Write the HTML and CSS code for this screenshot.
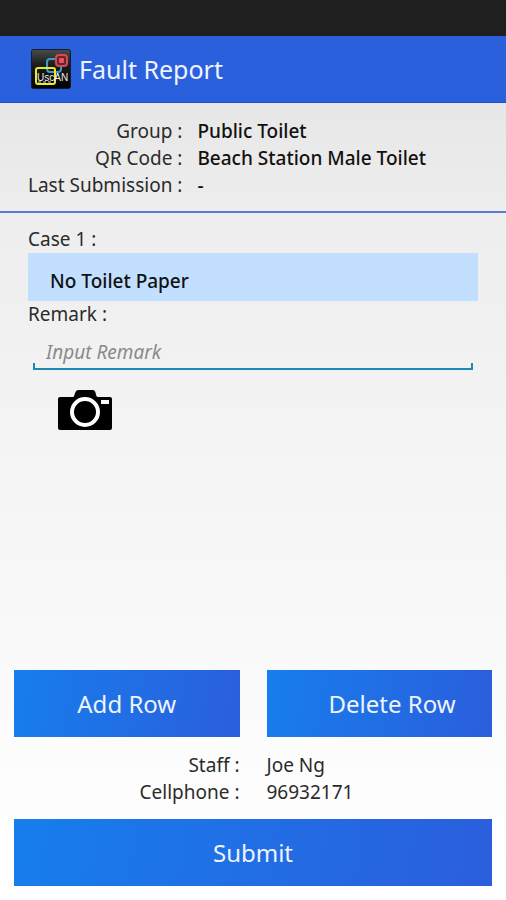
FILE: index.html
```html
<!DOCTYPE html>
<html lang="en">
<head>
<meta charset="utf-8">
<meta name="viewport" content="width=device-width, initial-scale=1">
<title>Fault Report</title>
<link rel="stylesheet" href="styles.css">
</head>
<body>
<div class="status-bar"></div>
<header class="app-bar">
  <svg class="logo" viewBox="0 0 40 40" aria-hidden="true">
    <defs>
      <linearGradient id="tile" x1="0" y1="0" x2="0" y2="1">
        <stop offset="0" stop-color="#4a4c4c"/>
        <stop offset=".4" stop-color="#1b1c1c"/>
        <stop offset="1" stop-color="#000"/>
      </linearGradient>
    </defs>
    <rect x=".5" y=".5" width="39" height="39" rx="2" fill="url(#tile)" stroke="#111c33"/>
    <rect x="16" y="10" width="14" height="13" rx="3" fill="none" stroke="#389fc8" stroke-width="2"/>
    <rect x="25" y="6" width="11" height="11" rx="3" fill="#65252d" stroke="#d94753" stroke-width="2"/>
    <rect x="28" y="9" width="5" height="5" rx="1" fill="#e55360"/>
    <rect x="5" y="19" width="19" height="16" rx="2" fill="none" stroke="#efe72c" stroke-width="2"/>
    <path d="M7 33h3M12 33h3M17 33h3" stroke="#ddd" stroke-width="1"/>
    <text class="logo-text" x="6" y="32">UscAN</text>
  </svg>
  <h1 class="title">Fault Report</h1>
</header>
<main class="page">
  <dl class="summary">
    <dt>Group :</dt><dd>Public Toilet</dd>
    <dt>QR Code :</dt><dd>Beach Station Male Toilet</dd>
    <dt>Last Submission :</dt><dd>-</dd>
  </dl>
  <form class="report">
    <section class="case">
      <p class="label" id="case-label">Case 1 :</p>
      <button class="fault" type="button" aria-describedby="case-label">No Toilet Paper</button>
      <label class="label" for="remark">Remark :</label>
      <div class="field"><input class="remark" id="remark" type="text" placeholder="Input Remark"></div>
      <button class="photo" type="button" aria-label="Take photo">
        <svg class="camera" viewBox="0 0 54 42" aria-hidden="true">
          <path d="M2 8h13c2 0 1-6 5-7h15c4 1 2 7 5 7h12q2 0 2 2v29q0 2-2 2H2q-2 0-2-2V10q0-2 2-2z" fill="#000"/>
          <circle cx="27" cy="23" r="13" fill="none" stroke="#fff" stroke-width="4"/>
          <path d="M43 11h8v4h-8z" fill="#fff"/>
        </svg>
      </button>
    </section>
    <div class="row-actions">
      <button class="action" type="button">Add Row</button>
      <button class="action action-delete" type="button">Delete Row</button>
    </div>
    <dl class="staff">
      <dt>Staff :</dt><dd>Joe Ng</dd>
      <dt>Cellphone :</dt><dd>96932171</dd>
    </dl>
    <button class="action" type="submit">Submit</button>
  </form>
</main>
</body>
</html>
```
FILE: styles.css
```css
* {
  box-sizing: border-box;
}

body {
  margin: 0;
  min-height: 100vh;
  display: flex;
  flex-direction: column;
  font: 19px/27px "Noto Sans", sans-serif;
  color: #2b2b2b;
  background: #fff;
}

h1, p, dl, dd {
  margin: 0;
}

button, input {
  font: inherit;
  border: 0;
  border-radius: 0;
}

.status-bar {
  height: 36px;
  background: #1f1f1f;
}

.app-bar {
  display: flex;
  align-items: center;
  gap: 8px;
  height: 67px;
  padding: 0 31px;
  color: #eef3ff;
  background: #2b60dc;
  border-bottom: 1px solid #1c50dc;
}

.logo {
  width: 40px;
  height: 40px;
}

.logo-text {
  font: 10px "Liberation Sans", sans-serif;
  fill: #eee;
}

.title {
  font-size: 25px;
  font-weight: 400;
}

.page {
  flex: 1;
  display: flex;
  flex-direction: column;
  background: linear-gradient(#e7e7e7, #eee 15%, #fff 95%);
}

.summary, .staff {
  display: grid;
}

.summary {
  grid-template-columns: max-content 1fr;
  column-gap: 15px;
  padding: 15px 28px 12px;
  border-bottom: 2px solid #5a7cd4;
}

.summary dt, .staff dt {
  text-align: right;
}

.summary dd {
  font-weight: 500;
  color: #111;
}

.report {
  flex: 1;
  display: flex;
  flex-direction: column;
  padding: 13px 14px 14px;
}

.case {
  flex: 1;
  display: flex;
  flex-direction: column;
  padding: 0 14px;
}

.fault {
  height: 48px;
  padding: 8px 22px 0;
  text-align: left;
  font-weight: 500;
  color: #111;
  background: #c2dfff;
}

.field {
  padding: 6px 5px 0;
}

.remark {
  display: block;
  width: 100%;
  height: 36px;
  padding: 0 13px;
  outline: 0;
  color: #222;
  background:
    linear-gradient(#1d87b5, #1d87b5) left bottom / 100% 2px no-repeat,
    linear-gradient(#1d87b5, #1d87b5) left bottom / 2px 7px no-repeat,
    linear-gradient(#1d87b5, #1d87b5) right bottom / 2px 7px no-repeat;
}

.remark::placeholder {
  color: #8a8a8a;
  font-style: italic;
  opacity: 1;
}

.photo {
  align-self: flex-start;
  margin: 19px 30px;
  padding: 0;
  background: none;
}

.camera {
  display: block;
  width: 54px;
  height: 42px;
}

.row-actions {
  display: grid;
  grid-template-columns: minmax(0, 1fr) minmax(0, 1fr);
  gap: 27px;
}

.action {
  height: 67px;
  padding: 0 24px;
  font-size: 24px;
  color: #eef4ff;
  background: linear-gradient(100deg, #177eed, #2b5edc);
}

.action-delete {
  padding: 0 24px 0 62px;
  text-align: left;
  white-space: nowrap;
}

.staff {
  grid-template-columns: 1fr 1fr;
  column-gap: 27px;
  padding: 15px 0 13px;
}
```
